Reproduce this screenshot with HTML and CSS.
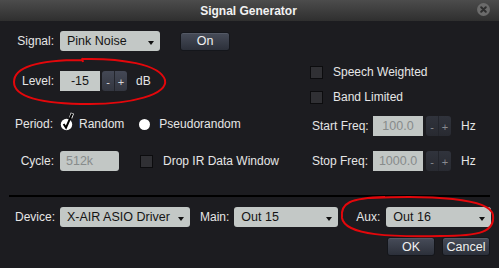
FILE: index.html
```html
<!DOCTYPE html>
<html>
<head>
<meta charset="utf-8">
<link rel="stylesheet" href="styles.css">
</head>
<body>
<div class="dialog">
  <div class="titlebar">
    <span class="title">Signal Generator</span>
    <span class="close"><svg width="13" height="13" viewBox="0 0 13 13"><circle cx="6.5" cy="6.5" r="6.5" fill="#6b6b6b"/><path d="M4.2 4.2 L8.8 8.8 M8.8 4.2 L4.2 8.8" stroke="#2e2e2e" stroke-width="2" stroke-linecap="round"/></svg></span>
  </div>

  <div class="row signal-row">
    <span class="label">Signal:</span>
    <div class="select sel-signal"><span>Pink Noise</span><i class="arrow"></i></div>
    <button class="btn btn-on">On</button>
  </div>

  <div class="panels">
    <div class="left">
      <div class="row level-row">
        <span class="label">Level:</span>
        <div class="field f-level">-15</div>
        <div class="spin"><span>-</span><span>+</span></div>
        <span class="unit">dB</span>
      </div>
      <div class="row period-row">
        <span class="label">Period:</span>
        <span class="checkradio"><svg width="14" height="19" viewBox="0 0 14 19"><circle cx="6.5" cy="12.5" r="5.7" fill="#fff"/><path d="M10.6 6 L12.4 1.2" stroke="#fff" stroke-width="3.4"/><path d="M3.6 12 L6 15.6 L12.2 1.6" stroke="#000" stroke-width="2" fill="none"/></svg></span>
        <span class="opt">Random</span>
        <span class="radio"></span>
        <span class="opt">Pseudorandom</span>
      </div>
      <div class="row cycle-row">
        <span class="label">Cycle:</span>
        <div class="field disabled f-cycle">512k</div>
        <span class="checkbox cb-drop"></span>
        <span class="opt">Drop IR Data Window</span>
      </div>
    </div>
    <div class="right">
      <div class="row cb-row speech">
        <span class="checkbox"></span><span class="opt">Speech Weighted</span>
      </div>
      <div class="row cb-row band">
        <span class="checkbox"></span><span class="opt">Band Limited</span>
      </div>
      <div class="row freq-row start">
        <span class="flabel">Start Freq:</span>
        <div class="field disabled f-freq">100.0</div>
        <div class="spin off"><span>-</span><span>+</span></div>
        <span class="unit">Hz</span>
      </div>
      <div class="row freq-row stop">
        <span class="flabel">Stop Freq:</span>
        <div class="field disabled f-freq">1000.0</div>
        <div class="spin off"><span>-</span><span>+</span></div>
        <span class="unit">Hz</span>
      </div>
    </div>
  </div>

  <div class="separator"></div>

  <div class="row device-row">
    <span class="label">Device:</span>
    <div class="select sel-device"><span>X-AIR ASIO Driver</span><i class="arrow"></i></div>
    <span class="mlabel">Main:</span>
    <div class="select sel-main"><span>Out 15</span><i class="arrow"></i></div>
    <span class="alabel">Aux:</span>
    <div class="select sel-aux"><span>Out 16</span><i class="arrow"></i></div>
  </div>

  <div class="row buttons-row">
    <button class="btn btn-ok">OK</button>
    <button class="btn btn-cancel">Cancel</button>
  </div>

  <svg class="annotations" width="499" height="268" viewBox="0 0 499 268">
    <path d="M82 59 C120 58 160 64 165 80 C168 95 130 104 90 104 C45 104 14 98 14 82 C14 66 40 60 82 60 M82 58 L83 62" stroke="#e3070b" stroke-width="2" fill="none"/>
    <path d="M370 198 C430 195 490 198 493 215 C495 232 480 236 440 236 C395 237 345 236 342 218 C340 203 350 198 385 197" stroke="#e3070b" stroke-width="2" fill="none"/>
  </svg>
</div>
</body>
</html>
```

FILE: styles.css
```css
html, body {
  margin: 0;
  padding: 0;
  background: #1c1c20;
}
body {
  width: 499px;
  height: 268px;
  overflow: hidden;
  font-family: "Liberation Sans", Arial, sans-serif;
  font-size: 12px;
  color: #e6e6e6;
}
.dialog {
  position: relative;
  width: 499px;
  height: 268px;
}
.titlebar {
  height: 21px;
  background: linear-gradient(#4c4c4c, #2f2f2f);
  display: flex;
  align-items: center;
  justify-content: center;
  position: relative;
}
.title {
  font-weight: bold;
  font-size: 12px;
  color: #f2f2f2;
  margin-left: -2px;
}
.close {
  position: absolute;
  left: 477px;
  top: 3px;
  width: 13px;
  height: 13px;
  display: block;
}
.close svg { display: block; }

.row {
  display: flex;
  align-items: center;
  height: 20px;
  white-space: nowrap;
}
.label {
  width: 54px;
  text-align: right;
  margin-right: 6px;
  flex: none;
}
.signal-row { margin-top: 10px; }

.select {
  height: 20px;
  background: #c3c8c6;
  border-radius: 3px;
  color: #141414;
  font-size: 12.5px;
  display: flex;
  align-items: center;
  justify-content: space-between;
  padding: 0 6px 0 7px;
  box-sizing: border-box;
  flex: none;
}
.arrow {
  display: block;
  width: 0;
  height: 0;
  border-left: 3px solid transparent;
  border-right: 3px solid transparent;
  border-top: 4px solid #111;
  margin-top: 3px;
}
.sel-signal { width: 100px; }
.btn {
  font-family: inherit;
  font-size: 12.5px;
  color: #f0f0f0;
  border: 1px solid #14161b;
  border-radius: 3px;
  background: linear-gradient(#474c59, #2c303a);
  padding: 0;
  height: 19px;
  line-height: 16px;
  box-shadow: inset 0 1px 0 rgba(255,255,255,0.08);
}
.btn-on { width: 50px; margin-left: 20px; }

.panels { display: flex; }
.left { width: 310px; flex: none; }
.right { flex: 1; }

.level-row { margin-top: 20px; }
.field {
  height: 20px;
  background: #c5cac8;
  color: #161616;
  font-size: 12.5px;
  display: flex;
  align-items: center;
  box-sizing: border-box;
  flex: none;
}
.f-level { width: 40px; justify-content: center; }
.spin {
  margin-left: 2px;
  width: 25px;
  height: 20px;
  border-radius: 3px;
  background: linear-gradient(#444855, #333640);
  display: flex;
  color: #d8d8d8;
  font-size: 11px;
  overflow: hidden;
  flex: none;
}
.spin span {
  flex: 1;
  display: flex;
  align-items: center;
  justify-content: center;
  padding-top: 1px;
}
.spin span:first-child { border-right: 1px solid #23252c; }
.spin.off { background: linear-gradient(#30333c, #282a31); color: #888b90; }
.unit { margin-left: 9px; }

.period-row { margin-top: 23px; }
.period-row .label { width: 53px; margin-right: 7px; }
.checkradio { width: 14px; height: 19px; margin-top: -6px; margin-right: 5px; flex: none; }
.checkradio svg { display: block; }
.radio {
  width: 11px;
  height: 11px;
  border-radius: 50%;
  background: #fff;
  margin-left: 15px;
  margin-right: 9px;
  flex: none;
}

.cycle-row { margin-top: 17px; }
.f-cycle {
  width: 59px;
  border-radius: 3px;
  padding-left: 6px;
}
.disabled { color: #878b8b; background: #c2c7c5; }
.checkbox {
  width: 13px;
  height: 13px;
  background: #303034;
  border: 1px solid #0c0c0e;
  box-sizing: border-box;
  flex: none;
}
.cb-drop { margin-left: 21px; margin-right: 10px; }

.cb-row .checkbox { margin-right: 10px; }
.speech { margin-top: 11px; }
.band { margin-top: 5px; }
.freq-row { margin-left: 2px; }
.start { margin-top: 9px; }
.stop { margin-top: 15px; }
.flabel { width: 56px; text-align: right; margin-right: 5px; flex: none; }
.f-freq { width: 50px; justify-content: center; }
.freq-row .spin { margin-left: 3px; }
.freq-row .unit { margin-left: 10px; }

.separator {
  margin: 24px 0 0 9px;
  width: 481px;
  height: 2px;
  background: #000;
}

.device-row { margin-top: 10px; }
.device-row .label { width: 55px; margin-right: 5px; }
.sel-device { width: 130px; }
.mlabel { margin-left: 10px; margin-right: 5px; }
.sel-main { width: 104px; }
.alabel { margin-left: 18px; margin-right: 6px; }
.sel-aux { width: 105px; }

.buttons-row {
  margin-top: 10px;
  height: 19px;
  justify-content: flex-end;
  width: 490px;
}
.btn-ok { width: 48px; }
.btn-cancel { width: 48px; margin-left: 7px; }

.annotations {
  position: absolute;
  left: 0;
  top: 0;
  pointer-events: none;
}
```
